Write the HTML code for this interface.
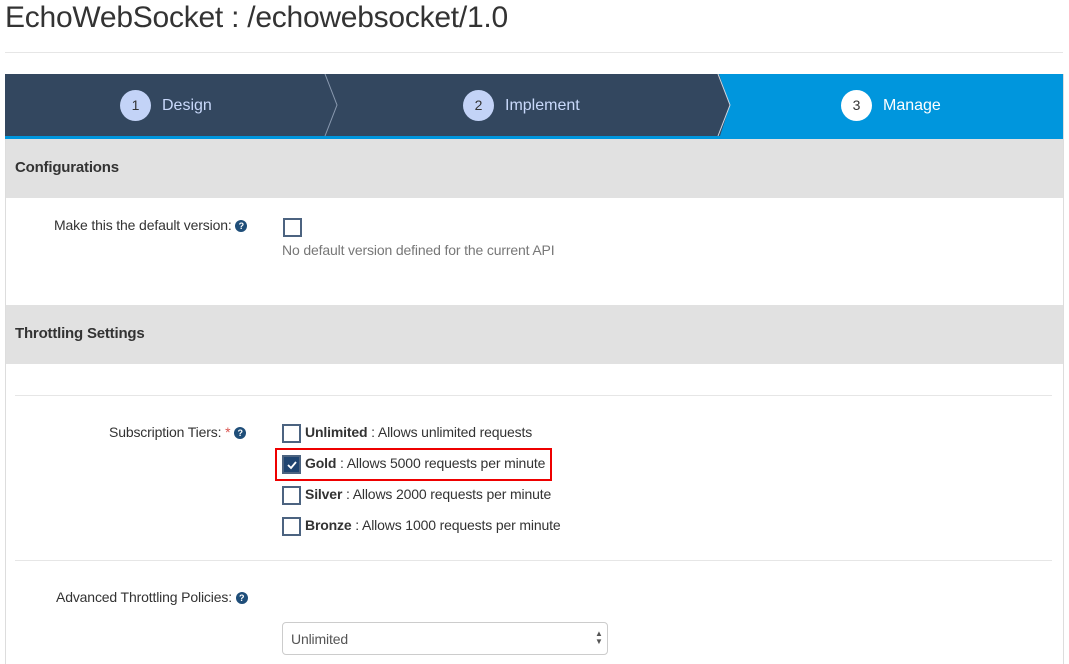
<!DOCTYPE html><html><head><style>
body{margin:0;background:#fff;font-family:"Liberation Sans",sans-serif;color:#333;width:1069px;height:663px;overflow:hidden;position:relative}
.a{position:absolute}
.q{display:inline-block;width:12px;height:12px;border-radius:50%;background:#1f4e79;color:#fff;font-size:9px;font-weight:bold;text-align:center;line-height:12px;vertical-align:1px}
.cb{position:absolute;width:17px;height:17px;border:2px solid #4c6380;box-sizing:border-box;background:#fff}
.t{font-size:14px;color:#333;white-space:nowrap;letter-spacing:-0.15px}
.c{display:inline-block;width:31px;height:31px;border-radius:50%;background:#c3d3f7;color:#333;font-size:14px;text-align:center;line-height:31px;margin-right:11px;vertical-align:middle}
.s{color:#c9d9fb;font-size:16px;line-height:31px}
</style></head><body>
<div class="a" style="left:5px;top:1px;font-size:30px;letter-spacing:-0.25px;color:#333">EchoWebSocket : /echowebsocket/1.0</div>
<div class="a" style="left:5px;top:52px;width:1058px;height:1px;background:#e6e6e6"></div>
<div class="a" style="left:5px;top:74px;width:1057px;height:590px;border-left:1px solid #ddd;border-right:1px solid #ddd"></div>
<svg class="a" style="left:5px;top:74px" width="1058" height="65">
<rect width="1058" height="65" fill="#33475f"/>
<polygon points="714,0 1058,0 1058,65 714,65 725,31" fill="#0096dd"/>
<polyline points="320,0 332,31 320,62" fill="none" stroke="#8a9ab0" stroke-width="1"/>
<polyline points="713,0 725,31 713,62" fill="none" stroke="#cfd8e3" stroke-width="1"/>
<rect y="62" width="1058" height="3" fill="#0096dd"/>
</svg>
<div class="a s" style="left:120px;top:90px"><span class="c">1</span>Design</div>
<div class="a s" style="left:463px;top:90px"><span class="c">2</span>Implement</div>
<div class="a s" style="left:841px;top:90px;color:#fff"><span class="c" style="background:#fff">3</span>Manage</div>
<div class="a" style="left:6px;top:139px;width:1057px;height:59px;background:#e1e1e1"></div>
<div class="a" style="left:15px;top:159px;font-size:15px;font-weight:bold;letter-spacing:-0.2px">Configurations</div>
<div class="a t" style="left:54px;top:217px">Make this the default version: <span class="q">?</span></div>
<div class="cb" style="left:283px;top:218px;width:19px;height:19px"></div>
<div class="a t" style="left:282px;top:242px;color:#777">No default version defined for the current API</div>
<div class="a" style="left:6px;top:305px;width:1057px;height:59px;background:#e1e1e1"></div>
<div class="a" style="left:15px;top:325px;font-size:15px;font-weight:bold;letter-spacing:-0.2px">Throttling Settings</div>
<div class="a" style="left:15px;top:395px;width:1037px;height:1px;background:#e6e6e6"></div>
<div class="a t" style="left:109px;top:424px">Subscription Tiers: <span style="color:#d9534f">*</span> <span class="q">?</span></div>
<div class="cb" style="left:282px;top:424px;width:19px;height:19px"></div>
<div class="a t" style="left:305px;top:424px"><b>Unlimited</b> : Allows unlimited requests</div>
<div class="a" style="left:275px;top:448px;width:277px;height:33px;border:2px solid #e00;box-sizing:border-box"></div>
<div class="cb" style="left:282px;top:455px;width:19px;height:19px;background:#1f4470;border-color:#4c6380"><svg width="15" height="15" style="position:absolute;left:0;top:0"><polyline points="4,8 7,11 12,5" fill="none" stroke="#fff" stroke-width="1.8"/></svg></div>
<div class="a t" style="left:305px;top:455px"><b>Gold</b> : Allows 5000 requests per minute</div>
<div class="cb" style="left:282px;top:486px;width:19px;height:19px"></div>
<div class="a t" style="left:305px;top:486px"><b>Silver</b> : Allows 2000 requests per minute</div>
<div class="cb" style="left:282px;top:517px;width:19px;height:19px"></div>
<div class="a t" style="left:305px;top:517px"><b>Bronze</b> : Allows 1000 requests per minute</div>
<div class="a" style="left:15px;top:560px;width:1037px;height:1px;background:#e6e6e6"></div>
<div class="a t" style="left:56px;top:589px">Advanced Throttling Policies: <span class="q">?</span></div>
<div class="a" style="left:282px;top:622px;width:326px;height:33px;border:1px solid #ccc;border-radius:4px;box-sizing:border-box"></div>
<div class="a t" style="left:291px;top:631px;color:#555">Unlimited</div>
<div class="a" style="left:595px;top:630px;font-size:8px;line-height:8px;color:#555">▲<br>▼</div>
</body></html>
